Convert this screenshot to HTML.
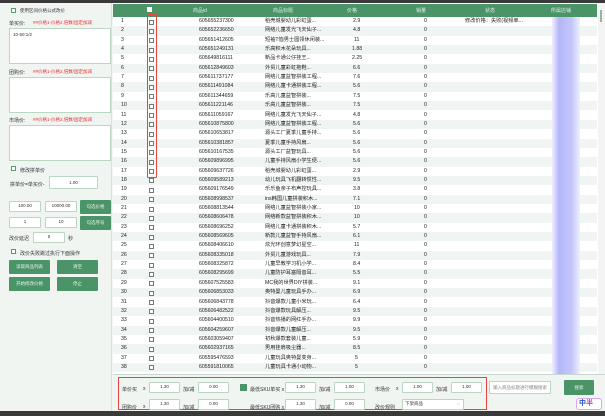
<!DOCTYPE html>
<html><head><meta charset="utf-8"><style>
*{margin:0;padding:0;box-sizing:border-box}
body{width:605px;height:416px;overflow:hidden;background:#f2f6f3;font-family:"Liberation Sans","Noto Sans CJK SC",sans-serif;font-size:5px;color:#333;position:relative}
.a{position:absolute}
.top{left:0;top:0;width:605px;height:3px;background:#3a3a3a}
.bot{left:0;top:411px;width:605px;height:5px;background:#3a3a3a}
.left{left:0;top:3px;width:112px;height:408px;background:#f0f5f2;border-right:1px solid #d8e2dc}
.cb{width:5px;height:5px;border:1px solid #5a9a70;background:#fff}
.ta{background:#fff;border:1px solid #bcd6c4}
.inp{background:#fff;border:1px solid #bcd6c4;text-align:center;font-size:4.5px;line-height:8px;border-radius:1px}
.btn{background:#4a9468;color:#e8f4ec;text-align:center;border-radius:1px;font-size:4.5px}
.red{color:#e53030;font-size:4.5px}
.hdr{left:113px;top:4px;width:484px;height:13px;background:#4a9468;color:#dcefe3}
.hdr span{position:absolute;top:3px;font-size:5px}
.row{position:absolute;left:113px;width:484px;height:9.35px;font-size:5.2px;line-height:9.35px;color:#222}
.row span{position:absolute}
</style></head><body>
<div class="a top"></div>
<div class="a left">
 <div class="a cb" style="left:11px;top:5px"></div><div class="a" style="left:20px;top:5px;font-size:4.5px">使用区间价格公式改价</div>
 <div class="a" style="left:9px;top:17px">单买价:</div><div class="a red" style="left:33px;top:17px">##价格1-价格2,倍数/固定加减</div>
 <div class="a ta" style="left:9px;top:25px;width:102px;height:36px"><div style="padding:3px 3px;font-size:4.5px">10-50:1/2</div></div>
 <div class="a" style="left:9px;top:66px">团购价:</div><div class="a red" style="left:33px;top:66px">##价格1-价格2,倍数/固定加减</div>
 <div class="a ta" style="left:9px;top:74px;width:102px;height:36px"></div>
 <div class="a" style="left:9px;top:114px">市场价:</div><div class="a red" style="left:33px;top:114px">##价格1-价格2,倍数/固定加减</div>
 <div class="a ta" style="left:9px;top:122px;width:102px;height:36px"></div>
 <div class="a cb" style="left:11px;top:163px"></div><div class="a" style="left:20px;top:164px">修改拼单价</div>
 <div class="a" style="left:10px;top:178px">拼单价=单买价-</div>
 <div class="a inp" style="left:49px;top:173px;width:49px;height:13px;line-height:11px">1.00</div>
 <div class="a inp" style="left:9px;top:198px;width:32px;height:11px">100.00</div>
 <div class="a inp" style="left:45px;top:198px;width:32px;height:11px">10000.00</div>
 <div class="a btn" style="left:80px;top:197px;width:31px;height:14px;line-height:14px">勾选价格</div>
 <div class="a inp" style="left:9px;top:214px;width:32px;height:11px">1</div>
 <div class="a inp" style="left:45px;top:214px;width:32px;height:11px">10</div>
 <div class="a btn" style="left:80px;top:213px;width:31px;height:14px;line-height:14px">勾选序号</div>
 <div class="a" style="left:9px;top:232px">改价延迟</div>
 <div class="a inp" style="left:33px;top:229px;width:32px;height:11px">5</div><div class="a" style="left:68px;top:232px">秒</div>
 <div class="a cb" style="left:11px;top:246px"></div><div class="a" style="left:20px;top:247px">改价失败跳过执行下面操作</div>
 <div class="a btn" style="left:9px;top:257px;width:41px;height:14px;line-height:14px">读取商品列表</div>
 <div class="a btn" style="left:57px;top:257px;width:41px;height:14px;line-height:14px">清空</div>
 <div class="a btn" style="left:9px;top:274px;width:41px;height:14px;line-height:14px">开始修改价格</div>
 <div class="a btn" style="left:57px;top:274px;width:41px;height:14px;line-height:14px">停止</div>
</div>
<div class="a" style="left:113px;top:3px;width:492px;height:371px;background:#fff"></div>
<div class="a hdr">
 <div class="a" style="left:34px;top:3px;width:5px;height:5px;background:#fff"></div>
 <span style="left:80px">商品id</span><span style="left:160px">商品标题</span><span style="left:234px">价格</span><span style="left:303px">销量</span><span style="left:372px">状态</span><span style="left:438px">所属店铺</span>
</div>
<div id="rows"></div>
<div class="a" style="left:552px;top:17px;width:28px;height:357px;background:linear-gradient(90deg,#f0f0fe,#b4b6f8 25%,#c4c6fa 70%,#eeeffe)"></div>
<div class="a" style="left:147px;top:14px;width:10px;height:164px;border:1px solid #e8463c;border-radius:1px"></div>
<div class="a" style="left:598px;top:3px;width:7px;height:371px;background:#f4f4f4"></div>
<div class="a" style="left:600px;top:10px;width:2px;height:12px;background:#8fb89e"></div>
<div class="a" style="left:113px;top:374px;width:492px;height:37px;background:#f0f5f2;border-top:1px solid #c8d8cc"></div>
<div class="a" style="left:118px;top:377px;width:369px;height:33px;border:1px solid #e8463c"></div>
<div class="a" style="left:122px;top:386px">单价买</div><div class="a" style="left:143px;top:386px">x</div>
<div class="a inp" style="left:149px;top:382px;width:31px;height:11px">1.30</div><div class="a" style="left:183px;top:386px">加/减</div>
<div class="a inp" style="left:198px;top:382px;width:31px;height:11px">0.00</div>
<div class="a" style="left:240px;top:384px;width:7px;height:7px;background:#4a9468"></div>
<div class="a" style="left:250px;top:386px">最低SKU单买 x</div>
<div class="a inp" style="left:285px;top:382px;width:31px;height:11px">1.30</div><div class="a" style="left:319px;top:386px">加/减</div>
<div class="a inp" style="left:334px;top:382px;width:31px;height:11px">1.00</div>
<div class="a" style="left:375px;top:386px">市场价</div><div class="a" style="left:396px;top:386px">x</div>
<div class="a inp" style="left:402px;top:382px;width:31px;height:11px">1.00</div><div class="a" style="left:436px;top:386px">加/减</div>
<div class="a inp" style="left:451px;top:382px;width:31px;height:11px">1.00</div>
<div class="a" style="left:122px;top:404px">团购价</div><div class="a" style="left:143px;top:404px">x</div>
<div class="a inp" style="left:149px;top:399px;width:31px;height:11px">1.30</div><div class="a" style="left:183px;top:404px">加/减</div>
<div class="a inp" style="left:198px;top:399px;width:31px;height:11px">0.00</div>
<div class="a" style="left:250px;top:404px">最低SKU团购 x</div>
<div class="a inp" style="left:285px;top:399px;width:31px;height:11px">1.30</div><div class="a" style="left:319px;top:404px">加/减</div>
<div class="a inp" style="left:334px;top:399px;width:31px;height:11px">0.00</div>
<div class="a" style="left:375px;top:404px">改价规则</div>
<div class="a inp" style="left:402px;top:399px;width:62px;height:11px;text-align:left;padding-left:2px">下架商品 <span style="float:right;margin-right:3px;color:#5a9a70">⌵</span></div>
<div class="a inp" style="left:489px;top:381px;width:62px;height:13px;text-align:left;padding-left:3px;line-height:11px;color:#888">输入商品标题进行模糊搜索</div>
<div class="a btn" style="left:564px;top:380px;width:30px;height:15px;line-height:15px">搜索</div>
<div class="a" style="left:576px;top:398px;width:26px;height:12px;border:1px solid #d8a8e8;border-radius:3px;background:#fff;color:#3050c8;font-size:7px;font-weight:bold;line-height:10px;padding-left:2px">中<span style="color:#c040c0">半</span></div>
<div class="a bot"></div>
<script>
var d=[["605655237300","2.9","稻壳城婴幼儿彩虹蛋..."],["605652236650","4.8","网络儿童发光飞天仙子..."],["605651412605","11","短袖T恤男士圆领休闲装..."],["605651249131","1.88","乐高积木花朵玩具..."],["605649816111","2.25","新品卡通公仔挂王..."],["605612849603","6.6","外贸儿童彩虹拖鞋..."],["605611737177","7.6","网络儿童益智拼装工程..."],["605611491084","5.6","网络儿童卡通拼装工程..."],["605611344659","7.5","乐高儿童益智拼装..."],["605611221146","7.5","乐高儿童益智拼装..."],["605611059167","4.8","网络儿童发光飞天仙子..."],["605610875800","5.6","网络儿童益智拼装工程..."],["605610653817","5.6","源头工厂夏季儿童手持..."],["605610381857","5.6","夏季儿童手持风扇..."],["605610167535","5.6","源头工厂益智玩具..."],["605609896995","5.6","儿童手持风扇小学生便..."],["605609637726","2.9","稻壳城婴幼儿彩虹蛋..."],["605609589213","9.5","幼儿玩具飞机翻转惯性..."],["605609176549","3.8","乐乐鱼亲子布声控玩具..."],["605608998537","7.1","ins韩国儿童拼装积木..."],["605608813544","10","网络儿童益智拼装小家..."],["605608606478","10","网络新款益智拼装积木..."],["605608696252","5.7","网络儿童卡通拼装积木..."],["605608569605","6.1","新款儿童益智手持风扇..."],["605608406610","11","炫光环创意梦幻星空..."],["605608335018","7.9","外贸儿童游戏玩具..."],["605608325872","8.4","儿童早教学习机小学..."],["605608295699","5.5","儿童防护耳塞隔音耳..."],["605607525583","9.1","MC我的世界DIY拼装..."],["605606853033","6.9","奥特曼儿童玩具手办..."],["605606843778","6.4","抖音爆款儿童小米玩..."],["605606482522","9.5","抖音爆款玩具解压..."],["605604400510","9.9","抖音热播的网红手办..."],["605604259607","9.5","抖音爆款儿童解压..."],["605603059407","5.9","初秋爆款套装儿童..."],["605602937165","8.5","男用挂肩吸尘器..."],["605595476593","5","儿童玩具奥特曼变身..."],["605591810065","5","儿童玩具卡通小动物..."]];
var h="";for(var i=0;i<38;i++){var y=17+i*9.35,bg=i%2?"#f0f4f2":"#fff";
h+='<div class="row" style="top:'+y+'px;background:'+bg+'"><span style="left:8px">'+(i+1)+'</span><span style="left:36px;top:2.5px;width:5px;height:5px;border:1px solid #777;background:#fff"></span><span style="left:86px">'+d[i][0]+'</span><span style="left:152px">'+d[i][2]+'</span><span style="left:'+(243-d[i][1].length)+'px">'+d[i][1]+'</span><span style="left:311px">0</span>'+(i==0?'<span style="left:352px">修改价格：失败(视频单...</span>':'')+'</div>';}
document.getElementById("rows").innerHTML=h;
</script>
</body></html>
